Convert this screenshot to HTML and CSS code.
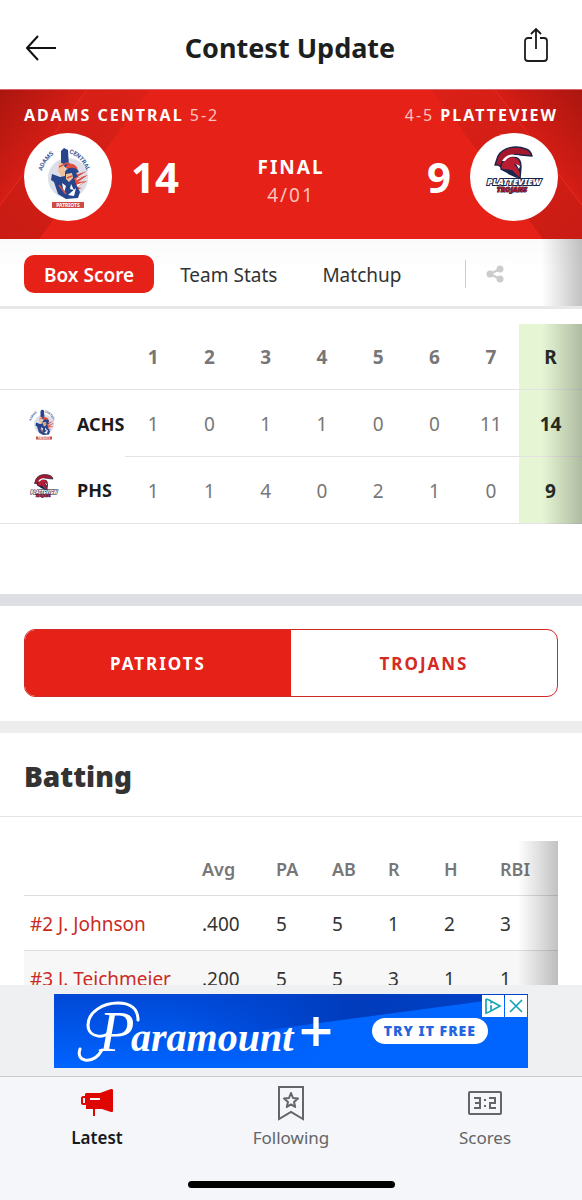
FILE: index.html
```html
<!DOCTYPE html>
<html lang="en">
<head>
<meta charset="utf-8">
<meta name="viewport" content="width=device-width, initial-scale=1">
<title>Contest Update</title>
<link rel="stylesheet" href="styles.css">
</head>
<body>
<div class="app">
  <header class="topbar">
    <button class="icon-button" aria-label="Back">
      <svg width="32" height="32" viewBox="0 0 32 32"><path d="M31 16H2M13 4L2 16l11 12" fill="none" stroke="#111" stroke-width="2" stroke-linejoin="round"/></svg>
    </button>
    <h1>Contest Update</h1>
    <button class="icon-button share-sheet" aria-label="Share">
      <svg width="26" height="36" viewBox="0 0 26 36"><path d="M9 11H5a3 3 0 0 0-3 3v17a3 3 0 0 0 3 3h16a3 3 0 0 0 3-3V14a3 3 0 0 0-3-3h-4M13 22V2M8 7l5-5 5 5" fill="none" stroke="#1c1c1c" stroke-width="1.8"/></svg>
    </button>
  </header>

  <main class="content">
    <section class="hero" aria-label="Final score">
      <svg class="hero-art" viewBox="0 0 582 150" preserveAspectRatio="none" aria-hidden="true">
        <defs>
          <linearGradient id="shade" x1="0" y1="0" x2="1" y2="1">
            <stop offset="0" stop-color="#ab160f"/><stop offset=".55" stop-color="#d91e16"/>
          </linearGradient>
          <linearGradient id="band" x1="0" y1="1" x2="1" y2="0">
            <stop offset="0" stop-color="#c91c14"/><stop offset="1" stop-color="#db2017"/>
          </linearGradient>
          <g id="folds">
            <path d="M0 0H150L39 150H0z" fill="url(#band)"/>
            <path d="M0 0H87L0 116z" fill="url(#shade)"/>
            <path d="M87 0L0 116" stroke="#ea2b20"/>
          </g>
        </defs>
        <use href="#folds"/>
        <use href="#folds" transform="matrix(-1 0 0 1 582 0)"/>
      </svg>
      <div class="hero-names">
        <p><b>ADAMS CENTRAL</b> 5-2</p>
        <p>4-5 <b>PLATTEVIEW</b></p>
      </div>
      <div class="hero-scores">
        <div class="side">
          <span class="crest">
            <svg class="patriots" viewBox="10 12 60 64" role="img" aria-label="Patriots logo">
              <defs>
                <path id="arc-left" d="M14 38Q18 25 32 17"/>
                <path id="arc-right" d="M41 20Q54 24 61 43"/>
              </defs>
              <g id="logo-patriots">
                <circle cx="40" cy="45" r="20" fill="#dcdeea"/>
                <path d="M33 18l3-3 4 2 1 18-8-2z" fill="#27458c"/>
                <path d="M40 31c7-1 10 3 10 8l-3 3 12-4-11 7 12-3-10 7 9-1-10 6 5 1-8 3-6-10 3-5c1-4-1-7-6-8z" fill="#df5143"/>
                <path d="M42 38l5 2-6 5zM48 46l9-4-8 5zM48 52l8-3-7 5z" fill="#fff"/>
                <path d="M31 29l5 2 1 9 3 1-1 6-6-4-3-5z" fill="#efc39b"/>
                <path d="M37 39c2-6 12-5 14 0l-3 1 2 4-4 1 2 6 4 8-2 6-12 1-8-5-4-12-3-2 1-6 8 3 5-1z" fill="#27458c"/>
                <path d="M38 41l6-1 1 5-4 4-3-3z" fill="#efc39b"/>
                <path d="M34 50l4 3-2 7zM43 51l3 6-4-1zM40 62l8-7-2 8z" fill="#fff"/>
                <path d="M31 34l8-4 8 3M39 45l5-2M31 52l7 9" fill="none" stroke="#df5143" stroke-width="1.5"/>
                <text class="crest-arc"><textPath href="#arc-left">ADAMS</textPath></text>
                <text class="crest-arc"><textPath href="#arc-right">CENTRAL</textPath></text>
                <rect x="24" y="69" width="32" height="6" fill="#cd4b40"/>
                <text class="crest-label" x="40" y="74" text-anchor="middle">PATRIOTS</text>
              </g>
            </svg>
          </span>
          <strong>14</strong>
        </div>
        <div class="status"><b>FINAL</b><span>4/01</span></div>
        <div class="side side-away">
          <strong>9</strong>
          <span class="crest">
            <svg class="trojans" viewBox="0 0 60 48" role="img" aria-label="Trojans logo">
              <g id="logo-trojans">
                <path d="M11 19l3-9C19 1 32-1 42 3c3 1 5 3 6 7l-11-1c-7-2-13 1-15 7l-5 4 3 3-6-4z" fill="#a5182b" stroke="#17244b" stroke-width="1.4" stroke-linejoin="round"/>
                <path d="M17 20c1-7 8-11 14-9 4 1 6 4 6 10l-1 12-8-8-5 1-6-3z" fill="#b81d32" stroke="#17244b" stroke-width="1.4" stroke-linejoin="round"/>
                <path d="M18 15c5-8 13-8 18-3-6-2-11-2-15 3z" fill="#fff"/>
                <path d="M30 18l7 2-1 7-3-5zM20 23l7 1 8 9-11-5z" fill="#17244b"/>
                <path d="M32 18l4 2-1 3z" fill="#fff"/>
                <text class="wordmark wordmark-school" x="30" y="39" text-anchor="middle">PLATTEVIEW</text>
                <text class="wordmark wordmark-mascot" x="28" y="46" text-anchor="middle">TROJANS</text>
              </g>
            </svg>
          </span>
        </div>
      </div>
    </section>

    <nav class="tabs" aria-label="Contest sections">
      <a class="tab tab-active" href="#box">Box Score</a>
      <a class="tab" href="#stats">Team Stats</a>
      <a class="tab tab-last" href="#matchup">Matchup</a>
      <button class="share" aria-label="Share contest">
        <svg width="18" height="18" viewBox="0 0 18 18"><path d="M14 4L4 9l10 5" fill="none" stroke="#ccc" stroke-width="2.4"/><g fill="#ccc"><circle cx="14" cy="4" r="3.5"/><circle cx="4" cy="9" r="3.5"/><circle cx="14" cy="14" r="3.5"/></g></svg>
      </button>
    </nav>

    <section class="linescore" id="box">
      <table>
        <colgroup><col class="col-team"><col span="7"><col class="col-total"></colgroup>
        <thead>
          <tr><td></td><th>1</th><th>2</th><th>3</th><th>4</th><th>5</th><th>6</th><th>7</th><th class="total">R</th></tr>
        </thead>
        <tbody>
          <tr>
            <th scope="row"><span class="team"><svg class="mini-patriots" viewBox="10 12 60 64" aria-hidden="true"><use href="#logo-patriots"/></svg>ACHS</span></th>
            <td>1</td><td>0</td><td>1</td><td>1</td><td>0</td><td>0</td><td>11</td><td class="total">14</td>
          </tr>
          <tr>
            <th scope="row"><span class="team"><svg class="mini-trojans" viewBox="0 0 60 48" aria-hidden="true"><use href="#logo-trojans"/></svg>PHS</span></th>
            <td>1</td><td>1</td><td>4</td><td>0</td><td>2</td><td>1</td><td>0</td><td class="total">9</td>
          </tr>
        </tbody>
      </table>
    </section>

    <section class="switcher">
      <div class="segmented">
        <button class="selected" aria-pressed="true">PATRIOTS</button>
        <button aria-pressed="false">TROJANS</button>
      </div>
    </section>

    <section class="batting" id="stats">
      <h2>Batting</h2>
      <div class="stats">
        <table>
          <colgroup><col class="col-player"><col class="col-avg"><col span="4" class="col-stat"><col></colgroup>
          <thead><tr><td></td><th>Avg</th><th>PA</th><th>AB</th><th>R</th><th>H</th><th>RBI</th></tr></thead>
          <tbody>
            <tr><td><a href="#johnson">#2 J. Johnson</a></td><td>.400</td><td>5</td><td>5</td><td>1</td><td>2</td><td>3</td></tr>
            <tr><td><a href="#teichmeier">#3 J. Teichmeier</a></td><td>.200</td><td>5</td><td>5</td><td>3</td><td>1</td><td>1</td></tr>
          </tbody>
        </table>
      </div>
    </section>
  </main>

  <aside class="ad" aria-label="Advertisement">
    <div class="banner">
      <svg class="banner-art" viewBox="0 0 474 74" aria-hidden="true">
        <defs>
          <linearGradient id="sky" x1="0" y1="0" x2="0" y2="1"><stop offset="0" stop-color="#0048d6"/><stop offset="1" stop-color="#0064ff"/></linearGradient>
          <linearGradient id="beam" x1="0" y1="0" x2="1" y2="0"><stop offset="0" stop-color="#003fc8" stop-opacity="0"/><stop offset=".5" stop-color="#003cbc"/><stop offset="1" stop-color="#0042c8"/></linearGradient>
          <linearGradient id="glow" x1="0" y1="0" x2="1" y2="0"><stop offset="0" stop-color="#0064ff" stop-opacity="0"/><stop offset=".3" stop-color="#0064ff"/></linearGradient>
        </defs>
        <rect width="474" height="74" fill="url(#sky)"/>
        <path d="M190 39L474 1V74H190z" fill="url(#glow)"/>
        <path d="M120 0H474V1L250 31L120 50z" fill="url(#beam)"/>
        <path d="M56 36c-2 9-22 9-22-5C34 18 49 9 64 9c13 0 20 6 20 17M48 56C44 63 38 67 31 66c-5-1-7-5-5-11" fill="none" stroke="#fff" stroke-width="3" stroke-linecap="round"/>
        <text class="brand" y="57"><tspan class="brand-initial" x="45">P</tspan><tspan x="77">aramount</tspan></text>
        <text class="brand-plus" x="244" y="59">+</text>
      </svg>
      <a class="cta" href="#offer">TRY IT FREE</a>
      <div class="ad-controls">
        <button aria-label="Ad information"><svg width="18" height="18" viewBox="0 0 18 18"><path d="M2 2v14l3-1L16 9 5 3 2 2M7 8v6M7 5v1.6" fill="none" stroke="#18a4b8" stroke-width="1.7"/></svg></button>
        <button aria-label="Close ad"><svg width="18" height="18" viewBox="0 0 18 18"><path d="M3 3l12 12M15 3L3 15" stroke="#18a4b8" stroke-width="1.7"/></svg></button>
      </div>
    </div>
  </aside>

  <nav class="bottom" aria-label="Main">
    <div class="bottom-tabs">
      <a class="current" href="#latest">
        <svg width="36" height="36" viewBox="0 0 36 36"><path d="M7 8h14l11-4c1 0 2 0 2 1v21c0 1-1 1-2 1l-9-3H7v-4H4c-1 0-2-1-2-2v-5c0-1 1-2 2-2h2V9z" fill="#df0500"/><path d="M4 13h2v5H4zM11 13h10v2H11z" fill="#f4f6f9"/><path d="M15 24v7" stroke="#df0500" stroke-width="2"/></svg>
        Latest
      </a>
      <a href="#following">
        <svg width="34" height="36" viewBox="0 0 34 36"><path d="M5 2h24v32l-12-7-12 7z" fill="none" stroke="#636567" stroke-width="2"/><path d="M17 8l2 5 5 .5-4 3.500 1.200 5-4.200-2.600-4.200 2.600 1.200-5-4-3.500 5-.5z" fill="none" stroke="#636567" stroke-width="2" stroke-linejoin="round"/></svg>
        Following
      </a>
      <a href="#scores">
        <svg width="36" height="36" viewBox="0 0 36 36"><rect x="2" y="7" width="32" height="22" rx="1" fill="none" stroke="#636567" stroke-width="2"/><path d="M7 13h6v10H7M8 18h5M22 13h6v5h-5v5h6" fill="none" stroke="#636567" stroke-width="2"/><path d="M17 14h2v2h-2zM17 20h2v2h-2z" fill="#636567"/></svg>
        Scores
      </a>
    </div>
    <div class="home-indicator"></div>
  </nav>
</div>
</body>
</html>
```
FILE: styles.css
```css
* { box-sizing: border-box; }
body, h1, h2, p { margin: 0; }
body {
  font-family: "Noto Sans", "Open Sans", sans-serif;
  font-size: 19px;
  color: #333;
  background: #fff;
}
button {
  font: inherit;
  border: 0;
  padding: 0;
  background: none;
  cursor: pointer;
}
a { color: inherit; text-decoration: none; }
svg { display: block; }
table { width: 100%; border-collapse: collapse; table-layout: fixed; }

.app { display: flex; flex-direction: column; height: 100vh; }

.topbar {
  display: flex;
  align-items: center;
  justify-content: space-between;
  padding: 27px 33px 21px 25px;
  flex: none;
}
.topbar h1 { font-size: 27px; line-height: 41px; color: #1d1e1e; }
.icon-button { display: flex; align-items: center; }
.share-sheet { padding-bottom: 5px; }

.content { flex: 1; min-height: 0; overflow-y: auto; scrollbar-width: none; }

.hero { position: relative; background: #e62118; color: #fff; padding: 14px 24px 18px; border-top: 1px solid #d9636a; }
.hero-art { position: absolute; inset: 0; width: 100%; height: 100%; }
.hero-names {
  position: relative;
  display: flex;
  justify-content: space-between;
  font-size: 16px;
  line-height: 22px;
  letter-spacing: 2px;
  color: #fbc3bd;
  margin-bottom: 7px;
}
.hero-names b { color: #fff; }
.hero-scores { position: relative; display: flex; align-items: center; }
.side { flex: 1; display: flex; align-items: center; gap: 19px; }
.side-away { justify-content: flex-end; }
.side strong { font-size: 42px; line-height: 48px; }
.crest {
  display: flex;
  align-items: center;
  justify-content: center;
  width: 88px;
  height: 88px;
  border-radius: 50%;
  background: #fff;
}
.patriots { width: 60px; height: 64px; }
.trojans { width: 60px; height: 48px; margin-bottom: 14px; }
.status { display: flex; flex-direction: column; align-items: center; font-size: 19px; line-height: 28px; letter-spacing: 2px; margin-top: 8px; }
.status span { color: #fbc3bd; }

.crest-arc { font: bold 6px "Roboto", sans-serif; fill: #3d5995; }
.crest-label { font: bold 5px "Noto Sans", sans-serif; fill: #fff; }
.wordmark { font-family: "Noto Sans", sans-serif; font-weight: 900; font-style: italic; stroke: #17244b; paint-order: stroke; }
.wordmark-school { font-size: 9px; fill: #fff; stroke-width: 2px; }
.wordmark-mascot { font-size: 7px; fill: #a5182b; stroke-width: 1px; }

.tabs {
  position: relative;
  display: flex;
  align-items: center;
  padding: 16px 24px 13px;
  border-bottom: 3px solid #e8e8e8;
  background: linear-gradient(#fafafa, #fff 30px);
}
.tab { line-height: 36px; padding: 2px 12px 0; }
.tab-active { background: #e62118; color: #fff; font-weight: 600; border-radius: 10px; padding: 2px 20px 0; margin-right: 14px; }
.tab-last { margin-left: 21px; }
.share { margin-left: auto; margin-right: 54px; border-left: 1px solid #ccc; padding: 5px 0 5px 20px; }
.tabs::after, .linescore::after, .stats::after {
  content: "";
  position: absolute;
  top: 0;
  right: 0;
  bottom: 0;
  width: 40px;
  background: linear-gradient(to right, rgba(0, 0, 0, 0), rgba(0, 0, 0, .24));
  pointer-events: none;
}

.linescore { position: relative; margin: 15px 0 70px; }
.col-team { width: 125px; }
.col-total { width: 63px; }
.linescore tr { height: 67px; }
.linescore thead tr { height: 65px; border-bottom: 1px solid #e3e3e3; }
.linescore th, .linescore td { padding: 2px 0 0; text-align: center; color: #777; }
.linescore tbody td { border-bottom: 1px solid #e3e3e3; }
.linescore tbody tr:last-child { border-bottom: 1px solid #e3e3e3; }
.linescore tbody th { color: #1b1b1b; font-size: 18px; }
.linescore .total { background: #e6f6d4; color: #262b24; font-weight: 700; }
.team { display: grid; grid-template-columns: 29px 1fr; gap: 19px; align-items: center; padding-left: 29px; text-align: left; }
.mini-patriots { width: 30px; height: 32px; }
.mini-trojans { width: 30px; height: 24px; margin-bottom: 8px; }

.switcher { border-top: 12px solid #dedfe3; border-bottom: 12px solid #ededed; padding: 23px 24px 24px; }
.segmented { display: flex; height: 68px; border: 1px solid #d02a27; border-radius: 11px; overflow: hidden; }
.segmented button { flex: 1; padding-top: 2px; font-size: 17px; font-weight: 700; letter-spacing: 2px; color: #d42a24; }
.segmented .selected { background: #e62118; color: #fff; }

.batting h2 { font-size: 28px; font-weight: 900; line-height: 40px; padding: 23px 24px 20px; border-bottom: 1px solid #e3e3e3; }
.stats { position: relative; margin: 24px; }
.col-player { width: 172px; }
.col-avg { width: 74px; }
.col-stat { width: 56px; }
.stats tr { height: 55px; border-bottom: 1px solid #dedede; }
.stats th, .stats td { padding: 2px 0 0 6px; text-align: left; white-space: nowrap; }
.stats th { color: #777; font-weight: 600; font-size: 18px; }
.stats tbody tr:nth-child(even) { background: #f7f7f7; }
.stats a { color: #cb2a25; }

.ad { display: flex; justify-content: center; padding: 9px 8px 8px; background: #eff0f1; flex: none; }
.banner { position: relative; width: 100%; max-width: 474px; }
.banner-art { width: 100%; height: auto; }
.brand, .brand-plus { font-family: "Liberation Serif", serif; font-style: italic; font-weight: bold; font-size: 40px; fill: #fff; }
.brand-initial { font-size: 58px; font-weight: normal; }
.brand-plus { font-family: "Open Sans", sans-serif; font-size: 60px; font-weight: 600; }
.cta {
  position: absolute;
  top: 24px;
  right: 40px;
  padding: 0 12px;
  border-radius: 13px;
  background: #fff;
  color: #2464df;
  font-size: 14px;
  font-weight: 900;
  line-height: 26px;
  letter-spacing: 1px;
}
.ad-controls { position: absolute; top: 1px; right: 1px; display: flex; gap: 1px; }
.ad-controls button { background: #fff; padding: 2px; }

.bottom { background: #f4f6f9; border-top: 1px solid #c9cbcd; flex: none; padding: 8px 0 12px; }
.bottom-tabs { display: grid; grid-template-columns: repeat(3, 1fr); margin-bottom: 31px; }
.bottom-tabs a { display: flex; flex-direction: column; align-items: center; gap: 5px; font-size: 17px; line-height: 24px; color: #636567; }
.bottom-tabs .current { color: #17191b; font-weight: 600; }
.home-indicator { width: 207px; height: 7px; margin: 0 auto; border-radius: 4px; background: #000; }
```
